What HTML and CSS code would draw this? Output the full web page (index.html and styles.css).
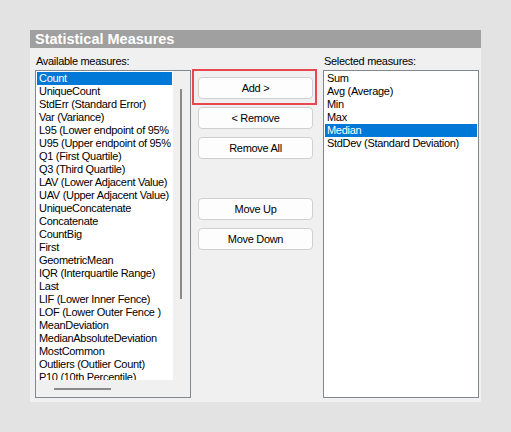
FILE: index.html
```html
<!DOCTYPE html>
<html>
<head>
<meta charset="utf-8">
<link rel="stylesheet" href="styles.css">
</head>
<body>
<div class="panel">
  <div class="header">Statistical Measures</div>
  <div class="body">
    <div class="col side">
      <div class="label">Available measures:</div>
      <div class="listbox scroll">
        <ul class="items">
          <li class="sel">Count</li>
          <li>UniqueCount</li>
          <li>StdErr (Standard Error)</li>
          <li>Var (Variance)</li>
          <li>L95 (Lower endpoint of 95% confidence interval)</li>
          <li>U95 (Upper endpoint of 95% confidence interval)</li>
          <li>Q1 (First Quartile)</li>
          <li>Q3 (Third Quartile)</li>
          <li>LAV (Lower Adjacent Value)</li>
          <li>UAV (Upper Adjacent Value)</li>
          <li>UniqueConcatenate</li>
          <li>Concatenate</li>
          <li>CountBig</li>
          <li>First</li>
          <li>GeometricMean</li>
          <li>IQR (Interquartile Range)</li>
          <li>Last</li>
          <li>LIF (Lower Inner Fence)</li>
          <li>LOF (Lower Outer Fence )</li>
          <li>MeanDeviation</li>
          <li>MedianAbsoluteDeviation</li>
          <li>MostCommon</li>
          <li>Outliers (Outlier Count)</li>
          <li>P10 (10th Percentile)</li>
          <li>P90 (90th Percentile)</li>
        </ul>
        <div class="vscroll"><div class="vthumb"></div></div>
        <div class="hscroll"><div class="hthumb"></div></div>
        <div class="corner"></div>
      </div>
    </div>
    <div class="col middle">
      <div class="btn add">Add &gt;<span class="highlight"></span></div>
      <div class="btn">&lt; Remove</div>
      <div class="btn">Remove All</div>
      <div class="btn spaced">Move Up</div>
      <div class="btn">Move Down</div>
    </div>
    <div class="col side">
      <div class="label">Selected measures:</div>
      <div class="listbox">
        <ul class="items">
          <li>Sum</li>
          <li>Avg (Average)</li>
          <li>Min</li>
          <li>Max</li>
          <li class="sel">Median</li>
          <li>StdDev (Standard Deviation)</li>
        </ul>
      </div>
    </div>
  </div>
</div>
</body>
</html>
```

FILE: styles.css
```css
html, body {
  margin: 0;
  padding: 0;
}
body {
  background: #e3e3e3;
  width: 511px;
  height: 432px;
  padding: 30px 0 0 30px;
  box-sizing: border-box;
  font-family: "Liberation Sans", Arial, sans-serif;
  font-size: 11px;
  letter-spacing: -0.3px;
  color: #000;
}
.panel {
  width: 451px;
  height: 372px;
  background: #f0f0f0;
  display: flex;
  flex-direction: column;
}
.header {
  height: 18px;
  line-height: 18px;
  background: #a0a0a0;
  color: #fff;
  font-weight: bold;
  font-size: 14.5px;
  letter-spacing: 0;
  padding-left: 5px;
  white-space: nowrap;
}
.body {
  display: flex;
  padding: 7px 0 0 5px;
}
.col {
  display: flex;
  flex-direction: column;
}
.side {
  width: 156px;
}
.label {
  height: 13px;
  line-height: 13px;
  margin-bottom: 2px;
  padding-left: 1px;
  white-space: nowrap;
}
.listbox {
  height: 328px;
  border: 1px solid #828790;
  box-sizing: border-box;
  background: #fff;
  overflow: hidden;
}
.listbox.scroll {
  display: grid;
  grid-template-columns: 137px 17px;
  grid-template-rows: 309px 17px;
  background: #f0f0f0;
}
.items {
  list-style: none;
  margin: 0;
  padding: 1px;
  background: #fff;
  overflow: hidden;
}
.items li {
  height: 13px;
  line-height: 13px;
  padding-left: 2px;
  white-space: nowrap;
  overflow: hidden;
}
.items li.sel {
  background: #0078d7;
  color: #fff;
}
.vscroll {
  background: #f0f0f0;
  padding: 18px 0 0 7px;
}
.vthumb {
  width: 2px;
  height: 210px;
  background: #8a8a8a;
}
.hscroll {
  background: #f0f0f0;
  padding: 8px 0 0 18px;
}
.hthumb {
  width: 57px;
  height: 2px;
  background: #8a8a8a;
}
.corner {
  background: #f0f0f0;
}
.middle {
  width: 132px;
  padding: 22px 0 0 7px;
  box-sizing: border-box;
}
.btn {
  position: relative;
  width: 115px;
  height: 22px;
  line-height: 20px;
  box-sizing: border-box;
  border: 1px solid #d0d0d0;
  border-radius: 4px;
  background: #fdfdfd;
  text-align: center;
  margin-bottom: 8px;
  white-space: nowrap;
}
.btn.spaced {
  margin-top: 31px;
}
.highlight {
  position: absolute;
  left: -7px;
  top: -9px;
  width: 125px;
  height: 36px;
  border: 2px solid #e9474f;
  box-sizing: border-box;
}
```
